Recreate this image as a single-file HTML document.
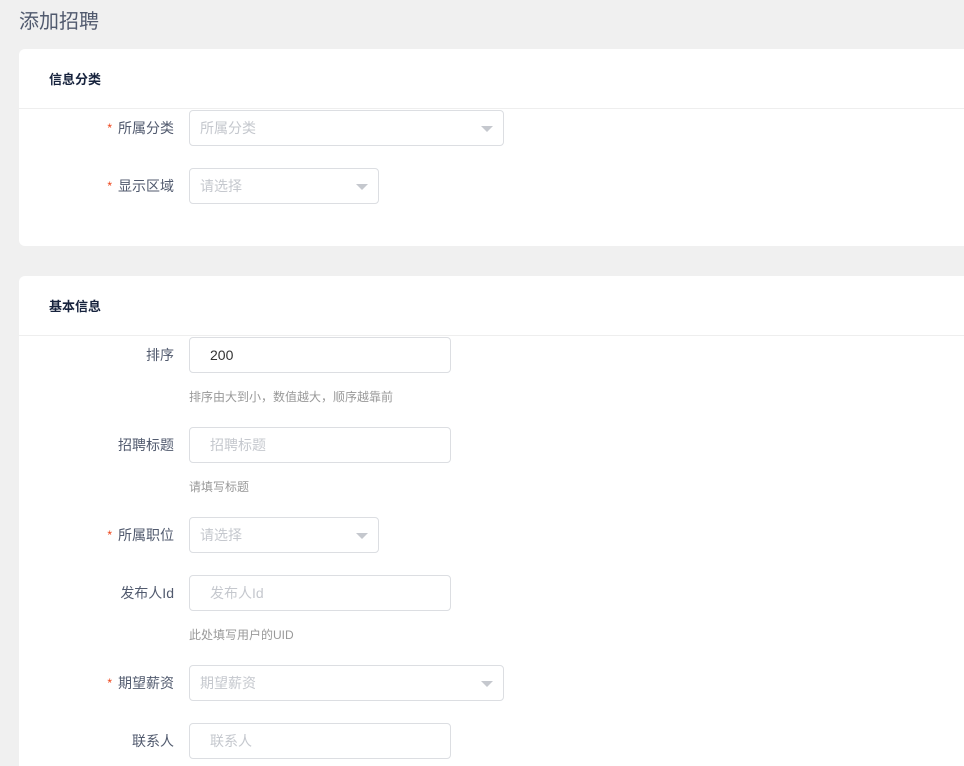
<!DOCTYPE html>
<html style="width:964px;height:766px;overflow:hidden"><head><meta charset="utf-8"><style>
*{box-sizing:border-box;margin:0;padding:0}
body{width:964px;height:766px;overflow:hidden;background:#f0f0f0;font-family:"Liberation Sans","Noto Sans CJK SC",sans-serif;position:relative;color:#515a6e}
.a{position:absolute}
.title{left:19px;top:5px;font-size:20px;color:#515a6e}
.card{position:absolute;left:19px;width:945px;background:#fff;border-radius:6px 0 0 6px}
.hd{height:60px;border-bottom:1px solid #eee;padding-left:30px;line-height:61px;font-size:13px;font-weight:bold;color:#17233d}
.lbl{position:absolute;right:790px;font-size:14px;line-height:37px;white-space:nowrap}
.lbl b{color:#ed4014;font-weight:normal;font-size:12px;margin-right:6px;position:relative;top:-1px}
.inp{position:absolute;left:189px;height:36px;border:1px solid #dcdee2;border-radius:4px;font-size:14px;line-height:35px;color:#c5c8ce;background:#fff}
.inp.t{padding-left:20px}
.inp.s{padding-left:10px}
.arr{position:absolute;right:10px;top:15px;width:0;height:0;border-left:6px solid transparent;border-right:6px solid transparent;border-top:6px solid #c5c8ce}
.help{position:absolute;left:189px;font-size:12px;color:#999}
</style></head><body>
<div class="a title">添加招聘</div>
<div class="card" style="top:49px;height:197px"><div class="hd">信息分类</div></div>
<div class="card" style="top:276px;height:490px;border-radius:6px 0 0 0"><div class="hd">基本信息</div></div>

<div class="lbl" style="top:110px"><b>*</b>所属分类</div>
<div class="inp s" style="top:110px;width:315px">所属分类<i class="arr"></i></div>
<div class="lbl" style="top:168px"><b>*</b>显示区域</div>
<div class="inp s" style="top:168px;width:190px">请选择<i class="arr"></i></div>

<div class="lbl" style="top:337px">排序</div>
<div class="inp t" style="top:337px;width:262px;color:#333">200</div>
<div class="help" style="top:388px">排序由大到小，数值越大，顺序越靠前</div>

<div class="lbl" style="top:427px">招聘标题</div>
<div class="inp t" style="top:427px;width:262px">招聘标题</div>
<div class="help" style="top:478px">请填写标题</div>

<div class="lbl" style="top:517px"><b>*</b>所属职位</div>
<div class="inp s" style="top:517px;width:190px">请选择<i class="arr"></i></div>

<div class="lbl" style="top:575px">发布人Id</div>
<div class="inp t" style="top:575px;width:262px">发布人Id</div>
<div class="help" style="top:626px">此处填写用户的UID</div>

<div class="lbl" style="top:665px"><b>*</b>期望薪资</div>
<div class="inp s" style="top:665px;width:315px">期望薪资<i class="arr"></i></div>

<div class="lbl" style="top:723px">联系人</div>
<div class="inp t" style="top:723px;width:262px">联系人</div>
</body></html>
